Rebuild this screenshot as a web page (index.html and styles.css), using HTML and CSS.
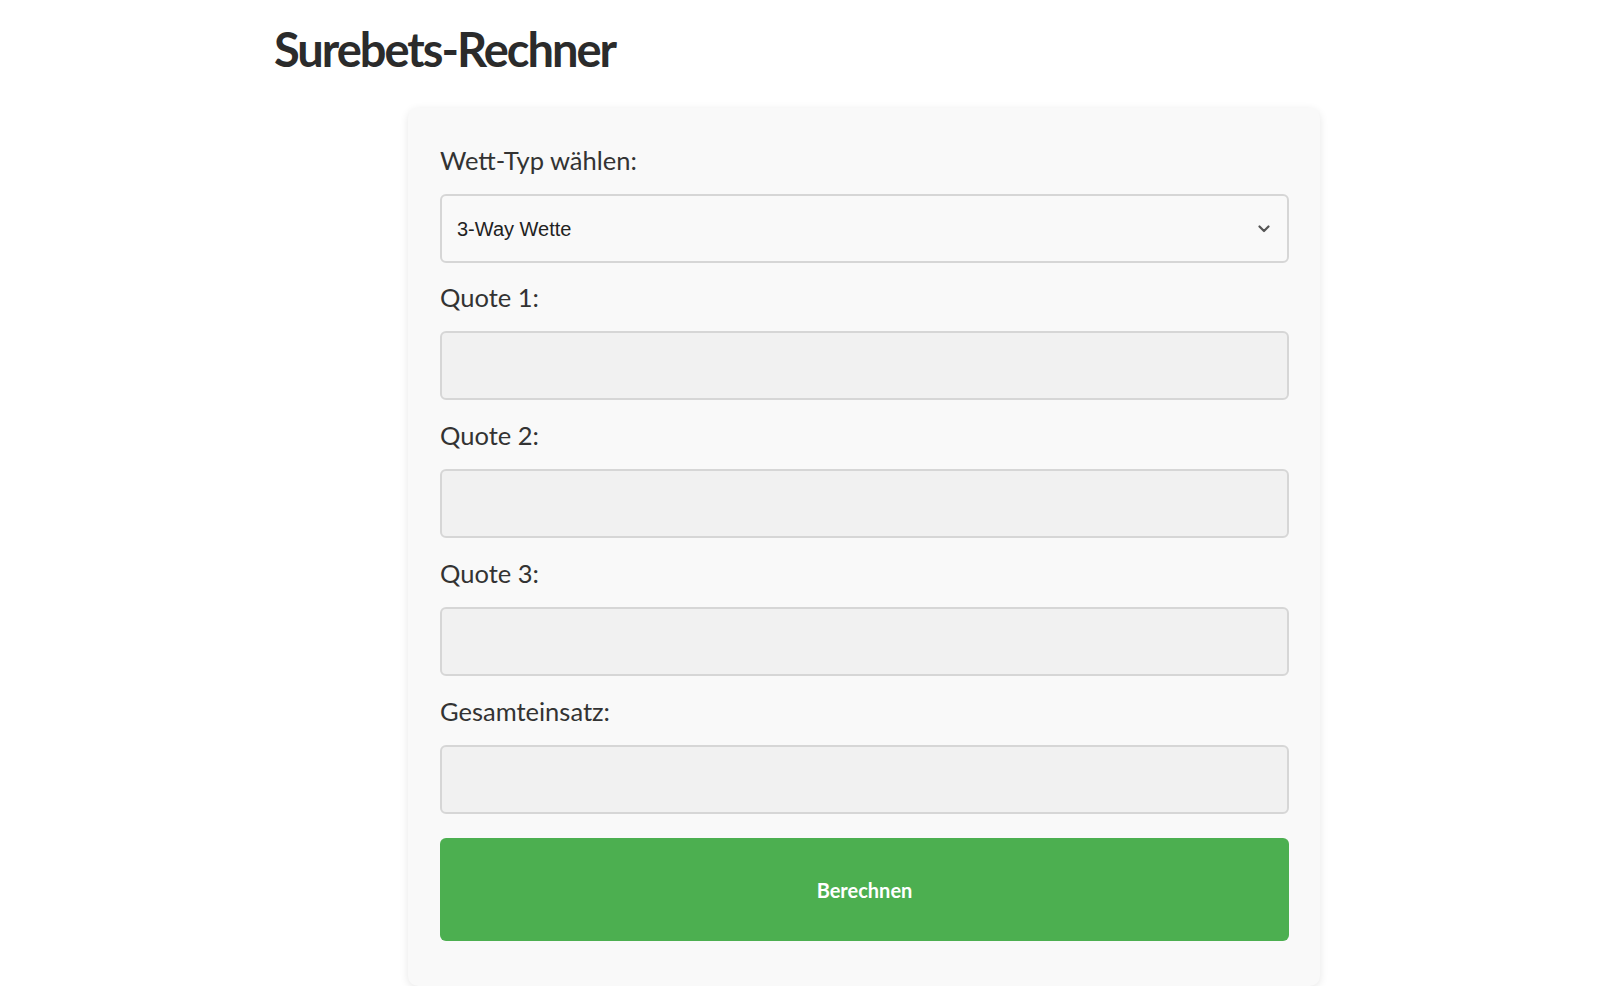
FILE: index.html
```html
<!DOCTYPE html>
<html>
<head>
    <title>Surebets-Rechner</title>
    <link rel="stylesheet" href="styles.css">
</head>
<body>
    <div class="page">
        <h1 class="title">Surebets-Rechner</h1>

        <!-- Rechner -->
        <div class="calc">
            <label class="calc-label" for="betType">Wett-Typ wählen:</label>
            <div class="select-wrap">
                <select id="betType" class="calc-select">
                    <option value="2">2-Way Wette</option>
                    <option value="3" selected>3-Way Wette</option>
                </select>
                <svg class="select-arrow" width="12" height="8" viewBox="0 0 12 8">
                    <path d="M1.5 1.5 L6 6 L10.5 1.5" fill="none" stroke="#555" stroke-width="2.2" stroke-linecap="round" stroke-linejoin="round"/>
                </svg>
            </div>

            <label class="calc-label" for="odd1">Quote 1:</label>
            <input class="calc-input" type="number" id="odd1" step="0.01">

            <label class="calc-label" for="odd2">Quote 2:</label>
            <input class="calc-input" type="number" id="odd2" step="0.01">

            <label class="calc-label" for="odd3">Quote 3:</label>
            <input class="calc-input" type="number" id="odd3" step="0.01">

            <label class="calc-label" for="stake">Gesamteinsatz:</label>
            <input class="calc-input" type="number" id="stake" step="1">

            <button class="calc-button">Berechnen</button>
        </div>
    </div>
</body>
</html>
```

FILE: styles.css
```css
body {
    font-family: Lato, "Open Sans", sans-serif;
    background-color: #fff;
    color: #333;
    margin: 0;
    padding: 0;
}

.page {
    padding: 0 0 0 274px;
}

.title {
    font-size: 47px;
    font-weight: bold;
    line-height: 56px;
    letter-spacing: -2px;
    color: #2b2b2b;
    margin: 0;
    padding-top: 21px;
}

.calc {
    width: 912px;
    box-sizing: border-box;
    margin: 31px 0 0 134px;
    padding: 37px 31px 45px 32px;
    background-color: #f9f9f9;
    border-radius: 10px;
    box-shadow: 0 2px 8px rgba(0, 0, 0, 0.1);
}

.calc-label {
    display: block;
    font-size: 25.5px;
    line-height: 30px;
    color: #333;
    margin-bottom: 19px;
}

.select-wrap {
    position: relative;
    margin-bottom: 19px;
}

.calc-select {
    display: block;
    width: 100%;
    height: 69px;
    box-sizing: border-box;
    appearance: none;
    -webkit-appearance: none;
    padding: 0 40px 0 15px;
    font-family: "Liberation Sans", Arial, sans-serif;
    font-size: 20px;
    color: #222;
    background-color: #f9f9f9;
    border: 2px solid #d6d6d6;
    border-radius: 6px;
}

.select-arrow {
    position: absolute;
    right: 19px;
    top: 31px;
}

.calc-input {
    display: block;
    width: 100%;
    height: 69px;
    box-sizing: border-box;
    margin: 0 0 20px 0;
    padding: 0 15px;
    font-size: 20px;
    background-color: #f1f1f1;
    border: 2px solid #d6d6d6;
    border-radius: 6px;
}

.calc-button {
    display: block;
    width: 100%;
    height: 103px;
    margin-top: 24px;
    font-family: Lato, sans-serif;
    font-size: 20px;
    font-weight: bold;
    color: #fff;
    background-color: #4caf50;
    border: none;
    border-radius: 6px;
    cursor: pointer;
}

.calc-button:hover {
    background-color: #45a049;
}
```
